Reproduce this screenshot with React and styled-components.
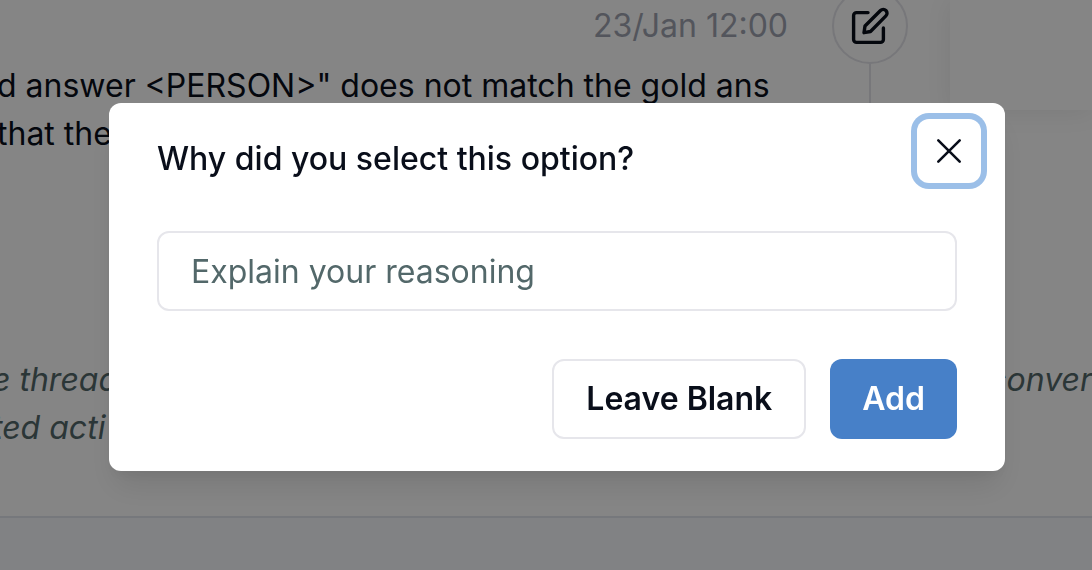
import React from 'react';
import styled, { createGlobalStyle } from 'styled-components';

const App = () => (
  <>
    <GlobalStyle />
    <Page>
      <Thread>
        <Message>
          <DateLine>23/Jan 12:00</DateLine>
          <Text>
            d answer &lt;PERSON&gt;" does not match the gold ans
            <br />
            that the
          </Text>
        </Message>
        <Timeline>
          <EditButton type="button" aria-label="Edit">
            <svg width="40" height="40" viewBox="0 0 40 40">
              <path d="M18 6.6H6.6a3 3 0 0 0-3 3v23.800a3 3 0 0 0 3 3h23.800a3 3 0 0 0 3-3V22" />
              <path d="M30.500 4.500a3.800 3.800 0 0 1 5.400 5.400L20.500 25.500l-6.500 1.200 1-6.700z" />
            </svg>
          </EditButton>
          <Connector />
        </Timeline>
        <SideCard />
      </Thread>
      <Hint>
        <HintLine>
          <span>e thread</span>
          <span>conver</span>
        </HintLine>
        <HintLine>
          <span>ted acti</span>
        </HintLine>
      </Hint>
      <BottomBar />
    </Page>
    <Overlay>
      <Dialog role="dialog" aria-modal="true" aria-labelledby="reason-title">
        <Title id="reason-title">Why did you select this option?</Title>
        <CloseButton type="button" aria-label="Close">
          <svg width="28" height="28" viewBox="0 0 28 28">
            <path d="M3.300 3.300l21.400 21.400M24.700 3.300L3.300 24.700" />
          </svg>
        </CloseButton>
        <Body>
          <Input
            type="text"
            aria-labelledby="reason-title"
            placeholder="Explain your reasoning"
          />
        </Body>
        <Footer>
          <Button type="button">Leave Blank</Button>
          <Button type="submit" $primary>
            Add
          </Button>
        </Footer>
      </Dialog>
    </Overlay>
  </>
);

export default App;

const GlobalStyle = createGlobalStyle`
  *, *::before, *::after {
    box-sizing: border-box;
  }

  body {
    margin: 0;
    overflow: hidden;
    background-color: #fff;
    color: #090e1a;
    font-family: 'Inter', sans-serif;
    font-size: 32px;
    line-height: 48px;
  }

  button, input {
    font: inherit;
    color: inherit;
  }
`;

const Page = styled.div`
  display: flex;
  flex-direction: column;
  min-height: 100vh;
  overflow: hidden;
`;

const Thread = styled.div`
  display: flex;
  height: 356px;
  margin-left: -3px;
`;

const Message = styled.div`
  flex: 1;
  min-width: 0;
  padding-top: 2px;
  overflow: hidden;
  white-space: nowrap;
`;

const DateLine = styled.div`
  padding-right: 44px;
  margin-bottom: 12px;
  color: #a0a4b0;
  text-align: right;
`;

const Text = styled.p`
  margin: 0;
`;

const Timeline = styled.div`
  display: flex;
  flex-direction: column;
  align-items: center;
  width: 76px;
  margin-top: -12px;
  margin-right: 42px;
`;

const EditButton = styled.button`
  display: flex;
  flex-shrink: 0;
  justify-content: center;
  align-items: center;
  width: 76px;
  height: 76px;
  padding: 0;
  background-color: #fff;
  border: 2px solid #e4e4ea;
  border-radius: 50%;

  path {
    fill: none;
    stroke: #090e1a;
    stroke-width: 3.4;
    stroke-linecap: round;
    stroke-linejoin: round;
  }
`;

const Connector = styled.div`
  width: 2px;
  height: 120px;
  background-color: #e4e4ea;
`;

const SideCard = styled.div`
  width: 142px;
  height: 110px;
  background-color: #fff;
  box-shadow: 0 2px 24px rgba(0, 0, 0, 0.08);
`;

const Hint = styled.div`
  height: 160px;
  margin-left: -8px;
  color: #53686a;
  font-style: italic;
`;

const HintLine = styled.div`
  display: flex;
  justify-content: space-between;
  white-space: nowrap;
`;

const BottomBar = styled.div`
  flex: 1;
  background-color: #f8fafd;
  border-top: 2px solid #e2e6ed;
`;

const Overlay = styled.div`
  position: fixed;
  inset: 0;
  display: flex;
  justify-content: center;
  align-items: center;
  padding: 4px 0 0 22px;
  background-color: rgba(0, 0, 0, 0.48);
`;

const Dialog = styled.section`
  position: relative;
  width: 100%;
  max-width: 896px;
  background-color: #fff;
  border-radius: 12px;
  box-shadow: 0 20px 30px -6px rgba(0, 0, 0, 0.1),
    0 8px 12px -4px rgba(0, 0, 0, 0.05);
`;

const Title = styled.h2`
  margin: 0;
  padding: 32px 48px;
  font-size: 32px;
  font-weight: 500;
`;

const CloseButton = styled.button`
  position: absolute;
  top: 16px;
  right: 24px;
  display: flex;
  justify-content: center;
  align-items: center;
  width: 64px;
  height: 64px;
  padding: 0;
  background-color: #fff;
  border: none;
  border-radius: 12px;
  box-shadow: 0 0 0 6px #9bbfe8;

  path {
    stroke: #090e1a;
    stroke-width: 2.6;
    stroke-linecap: round;
  }
`;

const Body = styled.div`
  padding: 16px 48px;
`;

const Input = styled.input`
  display: block;
  width: 100%;
  height: 80px;
  padding: 0 32px;
  background-color: #fff;
  border: 2px solid #e6e6eb;
  border-radius: 12px;
  outline: none;

  &::placeholder {
    color: #53686a;
    opacity: 1;
  }
`;

const Footer = styled.div`
  display: flex;
  justify-content: flex-end;
  gap: 24px;
  padding: 32px 48px;
`;

const Button = styled.button`
  height: 80px;
  padding: 0 32px;
  background-color: ${(props) => (props.$primary ? '#4780c8' : '#fff')};
  border: ${(props) => (props.$primary ? 'none' : '2px solid #e6e6eb')};
  border-radius: 12px;
  color: ${(props) => (props.$primary ? '#fff' : '#090e1a')};
  font-weight: 600;
  cursor: pointer;
`;
